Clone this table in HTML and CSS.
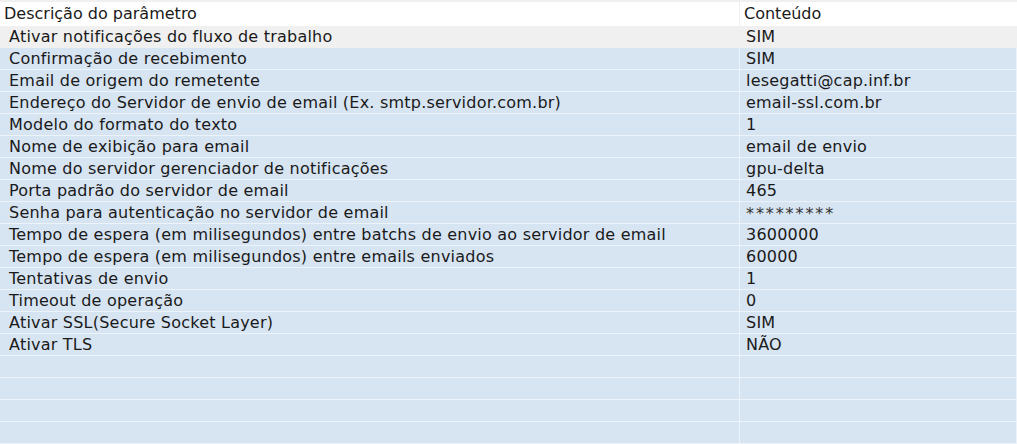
FILE: index.html
```html
<!DOCTYPE html>
<html lang="pt-BR">
<head>
<meta charset="utf-8">
<title>Parâmetros</title>
<link rel="stylesheet" href="styles.css">
</head>
<body>
<div class="grid">
  <div class="row head">
    <div class="c1">Descrição do parâmetro</div>
    <div class="c2">Conteúdo</div>
  </div>
  <div class="row sel"><div class="c1">Ativar notificações do fluxo de trabalho</div><div class="c2">SIM</div></div>
  <div class="row"><div class="c1">Confirmação de recebimento</div><div class="c2">SIM</div></div>
  <div class="row"><div class="c1">Email de origem do remetente</div><div class="c2">lesegatti@cap.inf.br</div></div>
  <div class="row"><div class="c1">Endereço do Servidor de envio de email (Ex. smtp.servidor.com.br)</div><div class="c2">email-ssl.com.br</div></div>
  <div class="row"><div class="c1">Modelo do formato do texto</div><div class="c2">1</div></div>
  <div class="row"><div class="c1">Nome de exibição para email</div><div class="c2">email de envio</div></div>
  <div class="row"><div class="c1">Nome do servidor gerenciador de notificações</div><div class="c2">gpu-delta</div></div>
  <div class="row"><div class="c1">Porta padrão do servidor de email</div><div class="c2">465</div></div>
  <div class="row"><div class="c1">Senha para autenticação no servidor de email</div><div class="c2"><span class="pw">*********</span></div></div>
  <div class="row"><div class="c1">Tempo de espera (em milisegundos) entre batchs de envio ao servidor de email</div><div class="c2">3600000</div></div>
  <div class="row"><div class="c1">Tempo de espera (em milisegundos) entre emails enviados</div><div class="c2">60000</div></div>
  <div class="row"><div class="c1">Tentativas de envio</div><div class="c2">1</div></div>
  <div class="row"><div class="c1">Timeout de operação</div><div class="c2">0</div></div>
  <div class="row"><div class="c1">Ativar SSL(Secure Socket Layer)</div><div class="c2">SIM</div></div>
  <div class="row"><div class="c1">Ativar TLS</div><div class="c2">NÃO</div></div>
  <div class="row"><div class="c1"></div><div class="c2"></div></div>
  <div class="row"><div class="c1"></div><div class="c2"></div></div>
  <div class="row"><div class="c1"></div><div class="c2"></div></div>
  <div class="row"><div class="c1"></div><div class="c2"></div></div>
</div>
</body>
</html>
```
FILE: styles.css
```css
html, body {
  margin: 0;
  padding: 0;
  background: #d7e4f2;
}
body {
  font-family: "DejaVu Sans", Verdana, sans-serif;
  font-size: 16px;
  color: #1a1a1a;
  overflow: hidden;
}
.grid {
  width: 1017px;
  border-top: 2px solid #f0f0f0;
}
.row {
  display: grid;
  grid-template-columns: 740px 1fr;
  height: 22px;
  border-bottom: 1px solid #edf3fa;
  box-sizing: border-box;
  line-height: 20px;
  letter-spacing: 0.22px;
  background: #d7e4f2;
}
.row .c1,
.row .c2 {
  padding-top: 1px;
  white-space: nowrap;
  border-right: 1px solid #edf3fa;
  box-sizing: border-box;
  height: 21px;
}
.row .c1 {
  padding-left: 9px;
}
.row .c2 {
  padding-left: 6px;
}
.pw {
  letter-spacing: 1.9px;
  line-height: 16px;
  display: inline-block;
  padding-top: 3px;
  color: #333;
}
.row.head {
  height: 24px;
  background: #ffffff;
  border-bottom: none;
  line-height: 24px;
  letter-spacing: 0;
}
.row.head .c1,
.row.head .c2 {
  padding-top: 0;
  height: 24px;
}
.row.head .c1 {
  padding-left: 4px;
  border-right: 1px solid #f0f0f0;
}
.row.head .c2 {
  padding-left: 4px;
  border-right: none;
}
.row.sel {
  background: #f0f0f0;
  border-bottom-color: #f0f0f0;
}
.row.sel .c1, .row.sel .c2 {
  border-right-color: #f0f0f0;
}
```
